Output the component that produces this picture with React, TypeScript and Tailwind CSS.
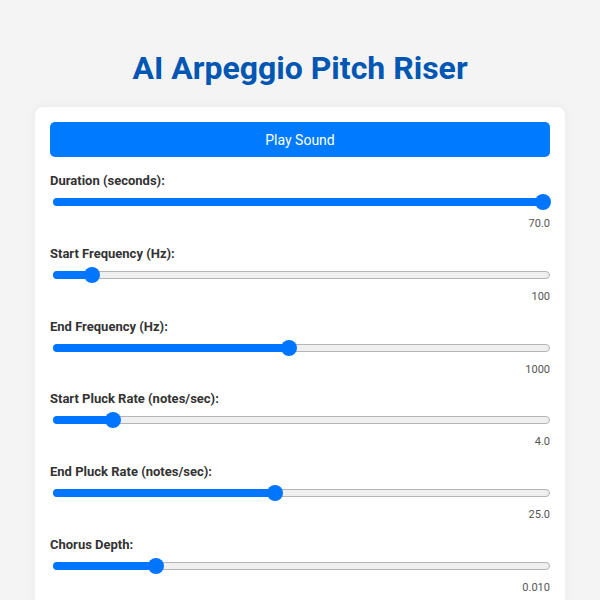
import { useState } from "react";

interface Param {
  label: string;
  value: string;
  pos: number;
}

const params: Param[] = [
  { label: "Duration (seconds):", value: "70.0", pos: 1 },
  { label: "Start Frequency (Hz):", value: "100", pos: 0.066 },
  { label: "End Frequency (Hz):", value: "1000", pos: 0.474 },
  { label: "Start Pluck Rate (notes/sec):", value: "4.0", pos: 0.109 },
  { label: "End Pluck Rate (notes/sec):", value: "25.0", pos: 0.445 },
  { label: "Chorus Depth:", value: "0.010", pos: 0.199 },
];

function Slider({ pos }: { pos: number }) {
  // thumb center travels between 7px and width - 7px
  const left = `calc(7px + (100% - 14px) * ${pos})`;
  return (
    <div className="relative h-4 ml-[3px] flex items-center">
      <div className="h-[8px] w-full rounded-full border border-[#b5b5b5] bg-[#efefef]" />
      <div
        className="absolute left-0 h-[8px] rounded-full bg-[#0075ff]"
        style={{ width: left }}
      />
      <div
        className="absolute h-4 w-4 -translate-x-1/2 rounded-full bg-[#0075ff]"
        style={{ left }}
      />
    </div>
  );
}

export default function App() {
  const [playing, setPlaying] = useState(false);

  return (
    <div className="min-h-screen bg-[#f4f4f4] px-[35px] pt-[44px] pb-8 font-['Roboto',sans-serif]">
      <h1 className="text-center text-[32px] leading-[48px] font-bold text-[#0056b3]">
        AI Arpeggio Pitch Riser
      </h1>
      <div className="mt-[15px] rounded-lg bg-white p-[15px] shadow-[0_0_10px_rgba(0,0,0,0.05)]">
        <button
          className="h-[35px] w-full rounded-[5px] bg-[#007bff] text-sm text-white"
          onClick={() => setPlaying(!playing)}
        >
          Play Sound
        </button>
        <div className="mt-4 flex flex-col gap-[14.8px]">
          {params.map((p) => (
            <div key={p.label}>
              <div className="text-[13px] leading-4 font-bold text-[#333]">{p.label}</div>
              <div className="mt-[5px]">
                <Slider pos={p.pos} />
              </div>
              <div className="mt-[7px] text-right text-[11px] leading-[14px] text-[#555]">{p.value}</div>
            </div>
          ))}
        </div>
      </div>
    </div>
  );
}
